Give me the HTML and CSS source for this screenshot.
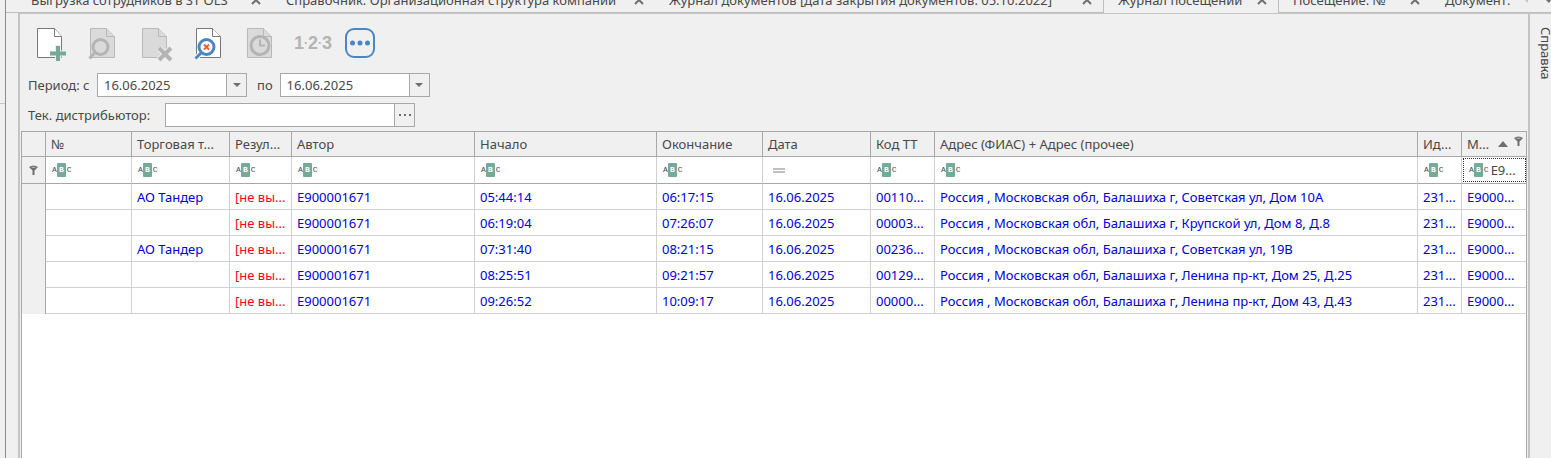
FILE: index.html
```html
<!DOCTYPE html>
<html lang="ru">
<head>
  <meta charset="UTF-8" />
  <meta name="viewport" content="width=device-width, initial-scale=1.0"/>
  <title>Журнал посещений</title>
  <link rel="stylesheet" href="styles.css">
</head>
<body>
  <aside class="left-dock"></aside>
  <div class="main">
    <nav class="tabs">
      <div class="tab tab-export"><a href="#">Выгрузка сотрудников в ST OLS</a><button class="tab-close" aria-label="Закрыть"><svg viewBox="0 0 10 10"><path d="M1 1l8 8M9 1l-8 8"/></svg></button></div>
      <div class="tab tab-company"><a href="#">Справочник: Организационная структура компании</a><button class="tab-close" aria-label="Закрыть"><svg viewBox="0 0 10 10"><path d="M1 1l8 8M9 1l-8 8"/></svg></button></div>
      <div class="tab tab-documents"><a href="#">Журнал документов [дата закрытия документов: 05.10.2022]</a><button class="tab-close" aria-label="Закрыть"><svg viewBox="0 0 10 10"><path d="M1 1l8 8M9 1l-8 8"/></svg></button></div>
      <div class="tab tab-visits active"><a href="#">Журнал посещений</a><button class="tab-close" aria-label="Закрыть"><svg viewBox="0 0 10 10"><path d="M1 1l8 8M9 1l-8 8"/></svg></button></div>
      <div class="tab tab-visit"><a href="#">Посещение: №</a><button class="tab-close" aria-label="Закрыть"><svg viewBox="0 0 10 10"><path d="M1 1l8 8M9 1l-8 8"/></svg></button></div>
      <div class="tab last"><a href="#">Документ:</a></div>
      <div class="tab-nav">
        <svg viewBox="0 0 28 8"><path class="nav-off" d="M2 0l3 3V0z"/><path class="nav-on" d="M23 0h5l-2 3z"/></svg>
      </div>
    </nav>

    <div class="workspace">
      <main class="panel">
        <div class="toolbar">
          <button class="tool" aria-label="Создать">
            <svg viewBox="0 0 36 36">
              <path class="page" d="M1.500 3.500h17l7 8v21h-24z"/>
              <path class="page" d="M18.500 3.500v8h7"/>
              <path class="plus-edge" d="M22 20v17M14 28.500h16"/>
              <path class="plus" d="M22 21v15M14 28.500h16"/>
            </svg>
          </button>
          <button class="tool" aria-label="Просмотр" disabled>
            <svg viewBox="0 0 36 36">
              <path class="page-off" d="M2.500 3.500h16l8 8v21h-24z"/>
              <path class="page-off" d="M18.500 3.500v8h8"/>
              <circle class="line-off" cx="12.500" cy="22" r="7.500"/>
              <path class="line-off" d="M7 27.500l-5.500 6"/>
            </svg>
          </button>
          <button class="tool" aria-label="Удалить" disabled>
            <svg viewBox="0 0 36 36">
              <path class="page-off" d="M2.500 3.500h16l8 8v21h-24z"/>
              <path class="page-off" d="M18.500 3.500v8h8"/>
              <path class="cross-edge" d="M19 23l12 12M31 23l-12 12"/>
              <path class="cross-off" d="M19 23l12 12M31 23l-12 12"/>
            </svg>
          </button>
          <button class="tool" aria-label="Сбросить фильтр">
            <svg viewBox="0 0 36 36">
              <path class="page" d="M4.500 3.500h16l8 8v21h-24z"/>
              <path class="page" d="M20.500 3.500v8h8"/>
              <path class="lens-edge" d="M10 27l-6 6"/>
              <circle class="lens" cx="14.500" cy="22" r="7.500"/>
              <path class="lens" d="M9 28l-5.500 5.500"/>
              <path class="reset" d="M12 19.500l5 5M17 19.500l-5 5"/>
            </svg>
          </button>
          <button class="tool" aria-label="История" disabled>
            <svg viewBox="0 0 36 36">
              <path class="page-off" d="M3.500 3.500h16l8 8v21h-24z"/>
              <path class="page-off" d="M19.500 3.500v8h8"/>
              <circle class="line-off" cx="16" cy="20.500" r="9"/>
              <path class="line-off thin" d="M16 14.500v6h5"/>
            </svg>
          </button>
          <button class="tool numbers" disabled>1<small>·</small>2<small>·</small>3</button>
          <button class="tool" aria-label="Ещё">
            <svg viewBox="0 0 36 36">
              <rect class="more" x="2" y="4" width="28" height="28" rx="8"/>
              <circle class="dot" cx="8.500" cy="18" r="2.500"/>
              <circle class="dot" cx="16" cy="18" r="2.500"/>
              <circle class="dot" cx="23.500" cy="18" r="2.500"/>
            </svg>
          </button>
        </div>

        <form class="filters">
          <div class="filter-line">
            <label for="date-from" class="from">Период: с</label>
            <div class="combo">
              <input type="text" id="date-from" value="16.06.2025" />
              <button type="button" aria-label="Выбрать дату"><svg viewBox="0 0 8 4"><path d="M0 0h8L4 4z"/></svg></button>
            </div>
            <label for="date-to" class="to">по</label>
            <div class="combo">
              <input type="text" id="date-to" value="16.06.2025" />
              <button type="button" aria-label="Выбрать дату"><svg viewBox="0 0 8 4"><path d="M0 0h8L4 4z"/></svg></button>
            </div>
          </div>
          <div class="filter-line">
            <label for="distributor" class="owner">Тек. дистрибьютор:</label>
            <div class="combo wide">
              <input type="text" id="distributor" />
              <button type="button" aria-label="Выбрать дистрибьютора"><svg class="dots" viewBox="0 0 14 4"><path d="M1 1h2v2H1zM6 1h2v2H6zM11 1h2v2h-2z"/></svg></button>
            </div>
          </div>
        </form>

        <div class="grid">
          <table>
            <colgroup>
              <col class="c-mark"><col class="c-num"><col class="c-shop"><col class="c-result"><col class="c-author"><col class="c-start"><col class="c-end"><col class="c-date"><col class="c-code"><col><col class="c-id"><col class="c-m">
            </colgroup>
            <thead>
              <tr class="titles">
                <th></th>
                <th>№</th>
                <th>Торговая т...</th>
                <th>Резул...</th>
                <th>Автор</th>
                <th>Начало</th>
                <th>Окончание</th>
                <th>Дата</th>
                <th>Код ТТ</th>
                <th>Адрес (ФИАС) + Адрес (прочее)</th>
                <th>Ид...</th>
                <th>
                  <div class="sorted">
                    <span>М...</span>
                    <svg class="sort" viewBox="0 0 10 6"><path d="M0 6h10L5 0z"/></svg>
                    <svg class="pin" viewBox="0 0 9 10"><path d="M0 2q4.500-3 9 0L5.500 5.500V10h-2V5.500z"/><path class="hole" d="M2 2.500q2.500-1.500 5 0z"/></svg>
                  </div>
                </th>
              </tr>
              <tr class="search">
                <th><svg class="pin" viewBox="0 0 9 10"><path d="M0 2q4.500-3 9 0L5.500 5.500V10h-2V5.500z"/><path class="hole" d="M2 2.500q2.500-1.500 5 0z"/></svg></th>
                <td><div class="cond"><span class="abc">A<b>B</b>C</span><input type="text" aria-label="№" /></div></td>
                <td><div class="cond"><span class="abc">A<b>B</b>C</span><input type="text" aria-label="Торговая точка" /></div></td>
                <td><div class="cond"><span class="abc">A<b>B</b>C</span><input type="text" aria-label="Результат" /></div></td>
                <td><div class="cond"><span class="abc">A<b>B</b>C</span><input type="text" aria-label="Автор" /></div></td>
                <td><div class="cond"><span class="abc">A<b>B</b>C</span><input type="text" aria-label="Начало" /></div></td>
                <td><div class="cond"><span class="abc">A<b>B</b>C</span><input type="text" aria-label="Окончание" /></div></td>
                <td><div class="cond"><svg class="equals" viewBox="0 0 12 5"><path d="M0 1h12M0 4h12"/></svg><input type="text" aria-label="Дата" /></div></td>
                <td><div class="cond"><span class="abc">A<b>B</b>C</span><input type="text" aria-label="Код ТТ" /></div></td>
                <td><div class="cond"><span class="abc">A<b>B</b>C</span><input type="text" aria-label="Адрес" /></div></td>
                <td><div class="cond"><span class="abc">A<b>B</b>C</span><input type="text" aria-label="Ид" /></div></td>
                <td><div class="cond current"><span class="abc">A<b>B</b>C</span><input type="text" aria-label="М" value="E9..." /></div></td>
              </tr>
            </thead>
            <tbody>
              <tr>
                <th></th><td></td><td>АО Тандер</td><td class="missing">[не вы...</td><td>E900001671</td><td>05:44:14</td><td>06:17:15</td><td>16.06.2025</td><td>00110...</td>
                <td>Россия , Московская обл, Балашиха г, Советская ул, Дом 10А</td><td>231...</td><td>E9000...</td>
              </tr>
              <tr>
                <th></th><td></td><td></td><td class="missing">[не вы...</td><td>E900001671</td><td>06:19:04</td><td>07:26:07</td><td>16.06.2025</td><td>00003...</td>
                <td>Россия , Московская обл, Балашиха г, Крупской ул, Дом 8, Д.8</td><td>231...</td><td>E9000...</td>
              </tr>
              <tr>
                <th></th><td></td><td>АО Тандер</td><td class="missing">[не вы...</td><td>E900001671</td><td>07:31:40</td><td>08:21:15</td><td>16.06.2025</td><td>00236...</td>
                <td>Россия , Московская обл, Балашиха г, Советская ул, 19В</td><td>231...</td><td>E9000...</td>
              </tr>
              <tr>
                <th></th><td></td><td></td><td class="missing">[не вы...</td><td>E900001671</td><td>08:25:51</td><td>09:21:57</td><td>16.06.2025</td><td>00129...</td>
                <td>Россия , Московская обл, Балашиха г, Ленина пр-кт, Дом 25, Д.25</td><td>231...</td><td>E9000...</td>
              </tr>
              <tr>
                <th></th><td></td><td></td><td class="missing">[не вы...</td><td>E900001671</td><td>09:26:52</td><td>10:09:17</td><td>16.06.2025</td><td>00000...</td>
                <td>Россия , Московская обл, Балашиха г, Ленина пр-кт, Дом 43, Д.43</td><td>231...</td><td>E9000...</td>
              </tr>
            </tbody>
          </table>
        </div>
      </main>
      <aside class="right-dock">
        <button>Справка</button>
      </aside>
    </div>
  </div>
</body>
</html>
```
FILE: styles.css
```css
* {
  box-sizing: border-box;
}

body {
  margin: 0;
  display: flex;
  height: 100vh;
  overflow: hidden;
  background: #f0f0f0;
  color: #484848;
  font: 13px/16px "Noto Sans", "DejaVu Sans Condensed", sans-serif;
}

button,
input {
  margin: 0;
  padding: 0;
  border: none;
  background: none;
  color: inherit;
  font: inherit;
}

a {
  color: inherit;
  text-decoration: none;
}

.left-dock {
  flex: none;
  width: 6px;
  border-right: 1px solid #8c8c8c;
  background: linear-gradient(#c8c8c8, #c8c8c8) 0 103px / 100% 1px no-repeat;
}

.main {
  flex: 1;
  min-width: 0;
  display: flex;
  flex-direction: column;
}

/* document tabs */
.tabs {
  flex: none;
  display: flex;
  align-items: flex-end;
  height: 13px;
  padding-left: 11px;
  overflow: hidden;
  box-shadow: inset 0 -1px #bebebe;
}

.tab {
  flex: none;
  display: flex;
  align-items: center;
  justify-content: space-between;
  height: 26px;
  padding: 0 11px 1px 14px;
  white-space: nowrap;
}

.tab-export { width: 255px; }
.tab-company { width: 383px; }
.tab-documents { width: 448px; }
.tab-visits { width: 176px; }
.tab-visit { width: 152px; }

.tab.active {
  background: #f0f0f0;
  border: solid #bebebe;
  border-width: 0 1px;
}

.tab.last {
  flex: 1 1 0;
  padding-right: 0;
  overflow: hidden;
}

.tab-close svg {
  display: block;
  width: 10px;
  height: 10px;
  fill: none;
  stroke: #6e6e6e;
  stroke-width: 2;
}

.tab-nav {
  flex: none;
  height: 13px;
}

.tab-nav svg {
  display: block;
  width: 28px;
  height: 8px;
}

.nav-off {
  fill: #c4c4c4;
}

.nav-on {
  fill: #6e6e6e;
}

.workspace {
  flex: 1;
  min-height: 0;
  display: flex;
}

.panel {
  flex: 1;
  min-width: 0;
  margin-left: 12px;
  display: flex;
  flex-direction: column;
  border: solid #c4c4c4;
  border-width: 1px 2px 0;
}

/* toolbar */
.toolbar {
  display: flex;
  gap: 16px;
  padding: 11px 16px 12px;
}

.tool svg {
  display: block;
  width: 36px;
  height: 36px;
  fill: none;
  overflow: visible;
}

.page {
  fill: #fff;
  stroke: #787878;
}

.page-off {
  fill: #dadada;
  stroke: #b8b8b8;
}

.plus-edge {
  stroke: #f0f0f0;
  stroke-width: 6;
}

.plus {
  stroke: #76aa98;
  stroke-width: 4;
}

.line-off {
  stroke: #b4b4b4;
  stroke-width: 3;
}

.line-off.thin {
  stroke-width: 2;
}

.cross-edge {
  stroke: #f0f0f0;
  stroke-width: 6;
}

.cross-off {
  stroke: #b4b4b4;
  stroke-width: 4;
}

.lens-edge {
  stroke: #fff;
  stroke-width: 5;
}

.lens {
  stroke: #4a86c5;
  stroke-width: 3;
}

.reset {
  stroke: #e0603c;
  stroke-width: 2;
}

.more {
  stroke: #4a86c5;
  stroke-width: 2;
}

.dot {
  fill: #4a86c5;
}

.numbers {
  width: 34px;
  margin-left: -2px;
  color: #b4b4b4;
  font: bold 18px/36px "Liberation Sans", sans-serif;
  white-space: nowrap;
}

.numbers small {
  font-size: 12px;
  line-height: 12px;
  vertical-align: 2px;
}

/* filters above the grid */
.filters {
  display: flex;
  flex-direction: column;
  gap: 6px;
  padding: 0 8px 4px;
}

.filter-line {
  display: flex;
  align-items: center;
  gap: 7px;
}

.from {
  width: 62px;
}

.to {
  margin-left: 3px;
}

.owner {
  width: 130px;
}

.combo {
  display: flex;
  width: 150px;
  height: 24px;
  border: 1px solid #a8a8a8;
}

.combo.wide {
  width: 250px;
}

.combo input {
  flex: 1;
  min-width: 0;
  padding-left: 6px;
  background: #fff;
}

.combo button {
  flex: none;
  width: 20px;
  border-left: 1px solid #a8a8a8;
}

.combo svg {
  display: block;
  width: 8px;
  height: 4px;
  margin: auto;
  fill: #6e6e6e;
}

.combo .dots {
  width: 14px;
}

/* grid */
.grid {
  flex: 1;
  min-height: 0;
  margin: 0 1px;
  border: 1px solid #a8a8a8;
  border-bottom: none;
  background: #fff;
}

table {
  width: 100%;
  table-layout: fixed;
  border-collapse: separate;
  border-spacing: 0;
}

.c-mark { width: 24px; }
.c-num { width: 86px; }
.c-shop { width: 98px; }
.c-result { width: 62px; }
.c-author { width: 183px; }
.c-start { width: 182px; }
.c-end { width: 106px; }
.c-date { width: 108px; }
.c-code { width: 64px; }
.c-id { width: 44px; }
.c-m { width: 64px; }

th,
td {
  height: 26px;
  padding: 0 0 0 5px;
  border: solid #d0d0d0;
  border-width: 0 1px 1px 0;
  font-weight: normal;
  text-align: left;
  white-space: nowrap;
  overflow: hidden;
}

th {
  background: #f0f0f0;
}

tr > :last-child {
  border-right: none;
}

.titles th {
  height: 25px;
  border-color: #a8a8a8;
}

.search th,
.search td {
  height: 27px;
  border-bottom-color: #a8a8a8;
}

.search th,
tbody th {
  border-right-color: #a8a8a8;
}

tbody th {
  border-bottom: none;
}

tbody td {
  color: #0000d8;
}

tbody .missing {
  color: #ff0018;
}

.sorted {
  display: flex;
  align-items: center;
  padding-right: 3px;
}

.sort {
  width: 10px;
  height: 6px;
  margin: 0 6px 0 auto;
  fill: #6e6e6e;
}

.pin {
  display: block;
  width: 9px;
  height: 10px;
  fill: #6e6e6e;
}

.sorted .pin {
  align-self: flex-start;
}

.search th .pin {
  margin-left: 2px;
}

.hole {
  fill: #f0f0f0;
}

.cond {
  display: flex;
  align-items: center;
  gap: 2px;
  height: 24px;
}

.cond input {
  flex: 1;
  width: 0;
  min-width: 0;
}

.cond.current {
  margin-left: -4px;
  padding-left: 4px;
  border: 1px dotted #303030;
}

.abc {
  flex: none;
  display: flex;
  align-items: center;
  padding-left: 1px;
  font: 8px/14px "Liberation Mono", monospace;
}

.abc b {
  width: 9px;
  margin: 0 1px 0 0;
  border-radius: 1px;
  background: #76aa98;
  color: #fff;
  text-align: center;
}

.equals {
  width: 12px;
  height: 5px;
  margin-left: 5px;
  fill: none;
  stroke: #808080;
}

.right-dock {
  flex: none;
  width: 21px;
  border-top: 1px solid #c4c4c4;
}

.right-dock button {
  margin: 13px 0 0 8px;
  writing-mode: vertical-rl;
}
```
